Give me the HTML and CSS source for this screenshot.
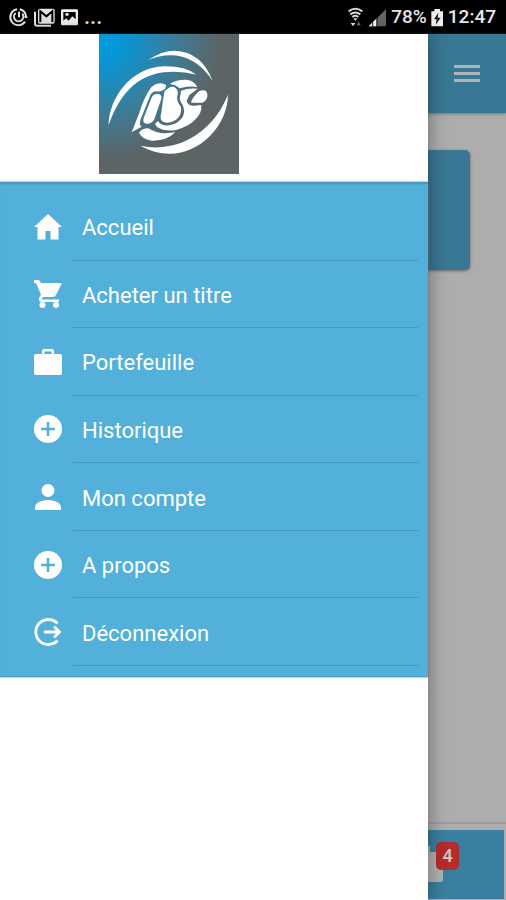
FILE: index.html
```html
<!DOCTYPE html>
<html lang="fr">
<head>
<meta charset="utf-8">
<meta name="viewport" content="width=device-width, initial-scale=1">
<title>Menu</title>
<link rel="stylesheet" href="styles.css">
</head>
<body>
<header class="status">
  <div class="status-group">
    <svg class="status-left" viewBox="24 21 216 63" aria-hidden="true">
      <g fill="none" stroke="#e4e4e4" stroke-width="6">
        <path d="M51 28a24 24 0 1 0 24 37M59 28a24 24 0 0 1 19 21"/>
        <path d="M47 39a14 14 0 1 0 20 2M57 35v17M82 51h-8"/>
        <path d="M105 35v36q0 6 6 6h42"/>
      </g>
      <rect x="114" y="26" width="50" height="45" rx="5" fill="#e4e4e4"/>
      <path d="M121 66V34l18 15 18-15v32" fill="none" stroke="#000" stroke-width="6"/>
      <rect x="183" y="28" width="51" height="48" rx="4" fill="#f0f0f0"/>
      <path d="M190 36h37v22l-10-9-11 13-8-7-8 7z" fill="#000"/>
      <circle cx="201" cy="43" r="5" fill="#f0f0f0"/>
    </svg>
    <span class="dots">...</span>
  </div>
  <div class="status-group">
    <svg class="signal" viewBox="54 21 117 63" aria-hidden="true">
      <g fill="none" stroke="#d8d8d8" stroke-width="6">
        <path d="M56 34q20-15 41 0M61 43q15-11 30 0M67 51q9-7 18 0"/>
      </g>
      <path d="M70 55h12l-6 8z" fill="#ddd"/>
      <path d="M62 69h14l-7 10z" fill="#eee"/>
      <path d="M80 76l6-11 6 11z" fill="#777"/>
      <path d="M116 79l52-51v51z" fill="#666"/>
      <path d="M116 79l23-23v23z" fill="#fff"/>
      <path d="M128 63v16M141 50v29" stroke="#222" stroke-width="3"/>
    </svg>
    <span>78%</span>
    <svg class="battery" viewBox="303 21 39 63" aria-hidden="true">
      <path d="M313 27h17v7h9v45h-35V34h9z" fill="#eee"/>
      <path d="M325 38l-13 20h8l-3 16 15-21h-9z" fill="#111"/>
    </svg>
    <span>12:47</span>
  </div>
</header>

<div class="stage">
  <div class="page">
    <div class="toolbar">
      <button class="menu-button" type="button" aria-label="Menu">
        <svg viewBox="0 0 26 18" aria-hidden="true"><path d="M0 1.5h26M0 8.5h26M0 15.5h26" stroke="#aeb5ba" stroke-width="3"/></svg>
      </button>
    </div>
    <main class="content"><div class="card"></div></main>
    <footer class="tabs">
      <div class="tab"></div>
      <div class="tab"></div>
      <div class="tab">
        <span class="bag">
          <svg viewBox="0 0 44 36" aria-hidden="true"><path d="M14 6V0h17v6h11q2 0 2 2v25q0 3-3 3H3q-3 0-3-3V8q0-2 2-2z" fill="#b1b1b1"/></svg>
          <span class="badge">4</span>
        </span>
      </div>
    </footer>
  </div>

  <aside class="drawer">
    <div class="brand">
      <svg class="logo" viewBox="27 12 420 420" role="img" aria-label="Logo">
        <defs>
          <radialGradient id="sky" gradientUnits="userSpaceOnUse" cx="40" cy="40" r="350">
            <stop offset="0" stop-color="#009ce2"/>
            <stop offset=".2" stop-color="#0c93d0"/>
            <stop offset=".62" stop-color="#3f7b96"/>
            <stop offset="1" stop-color="#5c6465"/>
          </radialGradient>
        </defs>
        <rect x="27" y="12" width="420" height="420" fill="url(#sky)"/>
        <g fill="#fff">
          <path d="M175 90Q215 62 254 62Q335 65 368 153Q322 82 250 76Q210 74 175 90z"/>
          <path d="M56 286C56 208 120 112 222 109Q285 108 319 134Q272 122 221 127C143 137 89 190 56 286z"/>
          <path d="M414 194C413 286 331 371 239 371Q193 371 151 347Q200 358 249 346C324 326 382 272 414 194z"/>
        </g>
        <g transform="translate(105 120)" fill="#fff">
          <path d="M20 187L43 128Q58 78 80 50Q102 32 124 45L121 55Q114 66 92 64Q78 66 74 80L47 148Q41 166 50 170L36 178z"/>
          <path d="M94 72Q112 70 109 86L88 148Q82 160 66 162Q51 160 56 144L81 80Q85 73 94 72z"/>
          <path d="M128 56Q140 46 152 54Q162 64 157 78Q153 90 168 112Q171 138 151 151Q132 162 116 156Q102 150 109 128Q112 100 118 66Q120 60 128 56z"/>
          <path d="M134 42Q155 28 184 29Q208 32 217 51Q195 47 171 53L163 55Q151 43 134 42z"/>
          <path d="M168 62Q192 53 218 56L193 75L185 92Q188 108 208 107L229 105Q231 127 215 144Q195 169 150 181Q116 184 96 171L90 161L99 153Q108 169 133 166Q158 162 173 141Q182 122 172 103Q161 91 166 76z"/>
          <path d="M198 98Q202 82 222 64Q243 55 247 71Q249 91 232 98z"/>
          <path d="M42 188Q51 175 70 175Q93 190 122 190L151 187Q125 213 81 212Q52 208 42 188z"/>
        </g>
      </svg>
    </div>
    <nav class="menu" aria-label="Menu principal">
      <ul>
        <li><a href="#accueil"><svg viewBox="0 0 28 28" aria-hidden="true"><path d="M14 1L0 14h3.500v12.500h8V18h5v8.500h8V14H28z"/></svg><span>Accueil</span></a></li>
        <li><a href="#acheter"><svg viewBox="0 0 28 28" aria-hidden="true"><path d="M0 0h5l2 3h21l-6 12q-1 2-3 2H9l-1.500 2.500H25V22H8q-4 0-3-4l2-3.500L2 3H0z"/><circle cx="8.500" cy="25" r="3"/><circle cx="22" cy="25" r="3"/></svg><span>Acheter un titre</span></a></li>
        <li><a href="#portefeuille"><svg viewBox="0 0 28 28" aria-hidden="true"><path fill-rule="evenodd" d="M8 6V3q0-2 2-2h8q2 0 2 2v3h6q2 0 2 2v17q0 2-2 2H2q-2 0-2-2V8q0-2 2-2zM10.500 6h7V3.500h-7z"/></svg><span>Portefeuille</span></a></li>
        <li><a href="#historique"><svg viewBox="0 0 28 28" aria-hidden="true"><circle cx="14" cy="14" r="14"/><path class="cut" d="M14 7v14M7 14h14"/></svg><span>Historique</span></a></li>
        <li><a href="#compte"><svg viewBox="0 0 28 28" aria-hidden="true"><circle cx="14" cy="7.500" r="6.500"/><path d="M1 27v-3c0-4.500 8-7 13-7s13 2.500 13 7v3z"/></svg><span>Mon compte</span></a></li>
        <li><a href="#apropos"><svg viewBox="0 0 28 28" aria-hidden="true"><circle cx="14" cy="14" r="14"/><path class="cut" d="M14 7v14M7 14h14"/></svg><span>A propos</span></a></li>
        <li><a href="#deconnexion"><svg viewBox="0 0 28 28" aria-hidden="true"><path class="line" d="M23.500 5.500a12.500 12.500 0 1 0 0 17M10 14h15M20 8.500l5.500 5.500-5.500 5.500"/></svg><span>Déconnexion</span></a></li>
      </ul>
    </nav>
  </aside>
</div>
</body>
</html>
```
FILE: styles.css
```css
* {
  box-sizing: border-box;
}

body {
  margin: 0;
  min-height: 100vh;
  display: flex;
  flex-direction: column;
  background: #adadad;
  font-family: Roboto, "Liberation Sans", sans-serif;
}

.status {
  display: flex;
  justify-content: space-between;
  align-items: center;
  height: 34px;
  padding: 0 10px 0 8px;
  background: #000;
  color: #e8e8e8;
  font-size: 19px;
  font-weight: 500;
  line-height: 36px;
}

.status-group {
  display: flex;
  align-items: center;
  gap: 4px;
}

.status svg {
  height: 21px;
}

.status-left {
  width: 72px;
}

.dots {
  font-size: 22px;
}

.signal {
  width: 39px;
}

.battery {
  width: 13px;
}

.stage {
  position: relative;
  flex: 1;
  display: flex;
}

.page {
  flex: 1;
  display: flex;
  flex-direction: column;
}

.toolbar {
  display: flex;
  justify-content: flex-end;
  align-items: center;
  height: 79px;
  padding-right: 26px;
  background: #397895;
  box-shadow: 0 1px 3px #777;
}

.menu-button {
  display: flex;
  padding: 0;
  border: 0;
  background: none;
}

.menu-button svg {
  width: 26px;
  height: 18px;
}

.content {
  flex: 1;
  padding: 37px 36px;
}

.card {
  height: 120px;
  border-radius: 5px;
  background: #397895;
  box-shadow: 0 1px 3px #666;
}

.tabs {
  display: flex;
  gap: 2px;
  padding: 6px 2px 1px;
  border-top: 2px solid #9c9c9c;
}

.tab {
  flex: 1;
  display: flex;
  justify-content: center;
  height: 69px;
  padding-top: 16px;
  background: #397f9f;
}

.bag {
  position: relative;
  height: 36px;
}

.bag svg {
  width: 44px;
  height: 36px;
}

.badge {
  position: absolute;
  top: -4px;
  right: -16px;
  width: 23px;
  height: 28px;
  border-radius: 5px;
  background: #b52b2e;
  color: #ccc;
  font-size: 18px;
  font-weight: 500;
  line-height: 27px;
  text-align: center;
}

.drawer {
  position: absolute;
  inset: 0 78px 0 0;
  background: #fff;
  box-shadow: 0 0 18px rgba(0, 0, 0, 0.4);
}

.brand {
  display: flex;
  justify-content: center;
  height: 148px;
  padding-right: 90px;
}

.logo {
  width: 140px;
  height: 140px;
}

.menu {
  padding: 11px 10px 10px 34px;
  background: #52b0da;
  border-bottom: 1px solid #489fc7;
  box-shadow: 0 0 2px #777, inset 0 3px 2px -1px #4796b9;
}

.menu ul {
  display: grid;
  grid-template-rows: repeat(7, 1fr);
  min-height: 473px;
  margin: 0;
  padding: 0;
  list-style: none;
}

.menu li {
  display: flex;
}

.menu a {
  flex: 1;
  display: flex;
  align-items: center;
  color: #fff;
  font-size: 22px;
  text-decoration: none;
}

.menu svg {
  width: 28px;
  height: 28px;
  margin-right: 11px;
  fill: #fff;
}

.menu .cut {
  stroke: #52b0da;
  stroke-width: 2.5;
}

.menu .line {
  fill: none;
  stroke: #fff;
  stroke-width: 2.8;
}

.menu span {
  flex: 1;
  align-self: stretch;
  display: flex;
  align-items: center;
  padding: 3px 0 0 9px;
  border-bottom: 1px solid #429abf;
}
```
